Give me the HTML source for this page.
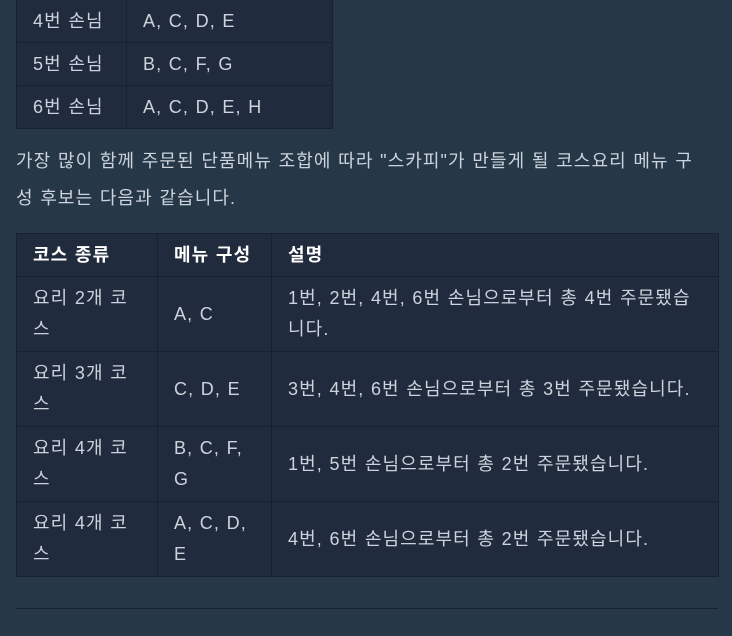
<!DOCTYPE html>
<html><head><meta charset="utf-8"><style>
html,body{margin:0;padding:0;background:#263747;width:732px;height:636px;overflow:hidden}
body{font-family:"Liberation Sans","Noto Sans CJK KR",sans-serif;font-size:18px;letter-spacing:1.1px;word-spacing:0.5px;color:#ccd3dc;position:relative;word-break:break-all}
table{border-collapse:collapse;background:#202b3d;position:absolute;left:16px;table-layout:fixed}
td,th{border:1px solid #172130;padding:0 16px;text-align:left;vertical-align:middle;line-height:31px;white-space:nowrap}
th{color:#fff;font-weight:bold}
#t1{top:-1px;width:317px}
#t1 td{height:42px}
#t2{top:233px;width:703px}
#t2 td{height:74px}
#t2 th{height:42px}
p{position:absolute;left:16px;top:143px;margin:0;width:710px;line-height:37px;white-space:nowrap}
hr{position:absolute;left:16px;top:608px;width:702px;margin:0;border:0;border-top:1px solid #172130}
</style></head><body>
<table id="t1">
<colgroup><col style="width:110px"><col></colgroup>
<tr><td>4번 손님</td><td>A, C, D, E</td></tr>
<tr><td>5번 손님</td><td>B, C, F, G</td></tr>
<tr><td>6번 손님</td><td>A, C, D, E, H</td></tr>
</table>
<p>가장 많이 함께 주문된 단품메뉴 조합에 따라 "스카피"가 만들게 될 코스요리 메뉴 구<br>성 후보는 다음과 같습니다.</p>
<table id="t2">
<colgroup><col style="width:141px"><col style="width:114px"><col></colgroup>
<tr><th>코스 종류</th><th>메뉴 구성</th><th>설명</th></tr>
<tr><td>요리 2개 코<br>스</td><td>A, C</td><td>1번, 2번, 4번, 6번 손님으로부터 총 4번 주문됐습<br>니다.</td></tr>
<tr><td>요리 3개 코<br>스</td><td>C, D, E</td><td>3번, 4번, 6번 손님으로부터 총 3번 주문됐습니다.</td></tr>
<tr><td>요리 4개 코<br>스</td><td>B, C, F,<br>G</td><td>1번, 5번 손님으로부터 총 2번 주문됐습니다.</td></tr>
<tr><td>요리 4개 코<br>스</td><td>A, C, D,<br>E</td><td>4번, 6번 손님으로부터 총 2번 주문됐습니다.</td></tr>
</table>
<hr>
</body></html>
